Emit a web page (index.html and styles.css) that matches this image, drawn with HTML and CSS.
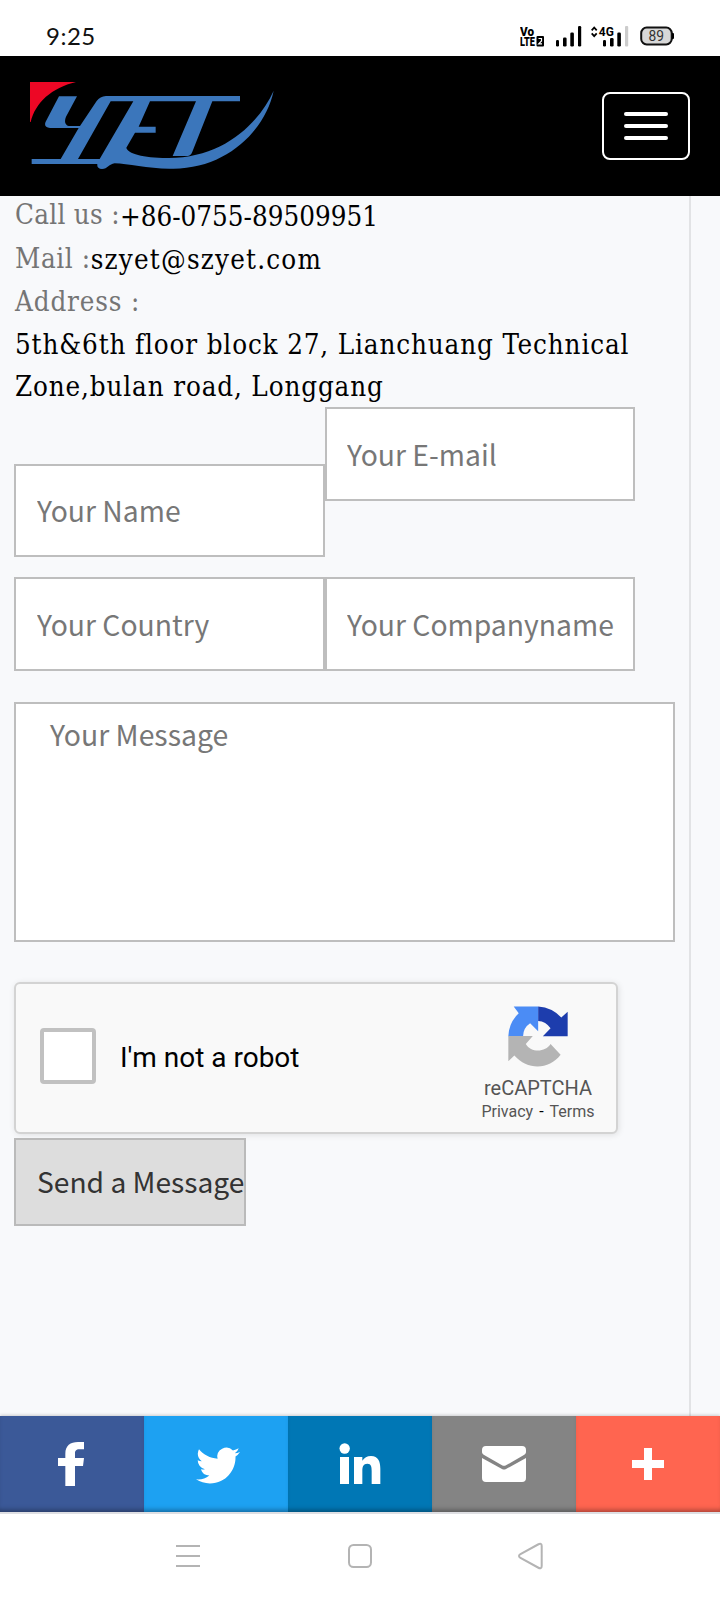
FILE: index.html
```html
<!DOCTYPE html>
<html lang="en">
<head>
<meta charset="utf-8">
<title>Contact</title>
<link rel="stylesheet" href="styles.css">
</head>
<body>
<div class="status">
  <span class="time">9:25</span>
  <svg class="indicators" width="160" height="26" viewBox="0 0 160 26">
    <g class="volte"><text x="0" y="10.500" textLength="14" lengthAdjust="spacingAndGlyphs">Vo</text><text x="0" y="21" textLength="15" lengthAdjust="spacingAndGlyphs">LTE</text></g>
    <rect x="16.5" y="11" width="7.5" height="10.5" rx="1"/>
    <path d="M18.500 13.500H21.500V16L18.700 18.900H22" fill="none" stroke="#fff" stroke-width="1.2"/>
    <g><rect x="36" y="15" width="3" height="6.5" rx="1.3"/><rect x="43" y="12.500" width="3.600" height="9" rx="1.300"/><rect x="50.300" y="7.500" width="3.600" height="14" rx="1.300"/><rect x="58" y="1" width="3.200" height="20.500" rx="1.300"/></g>
    <path d="M71.700 5.300L74.200 2.500L76.700 5.300M71.700 8.300L74.200 11.100L76.700 8.300" fill="none" stroke="#000" stroke-width="1.800"/>
    <text class="net" x="78.800" y="10.700" textLength="15" lengthAdjust="spacingAndGlyphs">4G</text>
    <g><rect x="83" y="15" width="3" height="6.500" rx="1.300"/><rect x="90" y="13" width="3.600" height="8.500" rx="1.300"/><rect x="97.300" y="7.500" width="3.600" height="14" rx="1.300"/><rect x="105" y="1" width="3.200" height="20.500" rx="1" fill="#ccc"/></g>
    <rect x="121.200" y="2.600" width="30.500" height="16.800" rx="5.500" fill="#d8d8d8" stroke="#111" stroke-width="2"/>
    <path d="M152 7.500l2 1v5l-2 1z"/>
    <text class="level" x="128.500" y="16" textLength="15.500" lengthAdjust="spacingAndGlyphs">89</text>
  </svg>
</div>
<header class="header">
  <svg class="logo" width="246" height="88" viewBox="90 246 738 264">
    <path fill="#ed0725" d="M90 246H228C155 263 106 308 92 366H90Z"/>
    <g fill="#3b76bb">
      <path d="M177 289H231L198 350C192 364 195 378 210 378H240L290 303Q300 289 318 288H720V304H637L577 455Q572 468 562 468H518L588 304H450L416 380H467V398H405L379 443C382 460 430 474 500 474C665 477 775 374 821 272C796 390 682 506 520 506C450 508 385 491 344 490C327 492 323 507 306 507Q290 506 292 492H95V477H182L236 384H150Q130 381 137 365ZM332 304L234 477H299L400 304Z"/>
    </g>
  </svg>
  <button class="menu" aria-label="Menu"><i></i><i></i><i></i></button>
</header>
<main class="page">
  <div class="content">
    <div class="contact">
      <p class="call"><span class="label">Call us :</span><span class="phone">+86-0755-89509951</span></p>
      <p class="mail"><span class="label">Mail :</span><span class="email">szyet@szyet.com</span></p>
      <p class="label addr">Address :</p>
      <p class="line1">5th&amp;6th floor block 27, Lianchuang Technical</p>
      <p class="line2">Zone,bulan road, Longgang</p>
    </div>
    <form class="form">
      <div class="fields">
        <input class="field name" placeholder="Your Name">
        <input class="field" placeholder="Your E-mail">
        <input class="field" placeholder="Your Country">
        <input class="field" placeholder="Your Companyname">
      </div>
      <textarea class="message" placeholder="Your Message"></textarea>
      <div class="captcha">
        <span class="check"></span>
        <span class="robot">I'm not a robot</span>
        <div class="brand">
          <svg width="60" height="61" viewBox="145 259 179 181">
            <path fill="#4b8cf5" d="M162 260H235V334L211 310Q190 324 190 349H146Q147 309 177 280Z"/>
            <path fill="#1d3dad" d="M235 260Q277 263 304 293L323 276V349H249L272 325Q258 304 235 303Z"/>
            <path fill="#b4b4b4" d="M146 348H219L198 372C214 399 257 397 272 372L302 404C268 449 203 451 164 406L146 423Z"/>
          </svg>
          <span class="brand-name">reCAPTCHA</span>
          <span class="terms">Privacy<b>-</b>Terms</span>
        </div>
      </div>
      <button class="send" type="button">Send a Message</button>
    </form>
  </div>
</main>
<nav class="share">
  <a class="fb"><svg width="144" height="96" viewBox="0 0 432 288"><path d="M196 210V150H174V126H196V113C196 89 211 78 234 78H252V100H238C228 100 225 105 225 113V126H252L249 150H225V210Z"/></svg></a>
  <a class="tw"><svg width="144" height="96" viewBox="0 0 432 288"><g transform="translate(156 82.500) scale(5.500)"><path d="M23.950 4.570a10 10 0 0 1-2.820.770 4.960 4.960 0 0 0 2.160-2.720c-.950.550-2 .950-3.130 1.180a4.920 4.920 0 0 0-8.380 4.480C7.690 8.090 4.070 6.130 1.640 3.160a4.820 4.820 0 0 0-.670 2.480c0 1.710.870 3.210 2.190 4.100a4.900 4.900 0 0 1-2.230-.620v.060a4.920 4.920 0 0 0 3.950 4.830 5 5 0 0 1-2.210.080 4.940 4.940 0 0 0 4.600 3.420A9.870 9.870 0 0 1 0 19.540a13.990 13.990 0 0 0 7.550 2.210c9.050 0 14-7.500 14-13.980 0-.210 0-.420-.020-.630a9.940 9.940 0 0 0 2.460-2.550z"/></g></svg></a>
  <a class="li"><svg width="144" height="96" viewBox="0 0 432 288"><circle cx="170" cy="97.500" r="15.500"/><path d="M156 123H183V204H156ZM198 123H223V134C229 125 237 120 249 120C271 120 277 137 277 158V204H251V165C251 153 250 143 238 143C226 143 223 152 223 165V204H198Z"/></svg></a>
  <a class="em"><svg width="144" height="96" viewBox="0 0 432 288"><path d="M162 90H270Q282 90 282 102V109Q282 113 277 116L222 148Q216 151 210 148L155 116Q150 113 150 109V102Q150 90 162 90ZM150 126L210 159Q216 162 222 159L282 126V186Q282 198 270 198H162Q150 198 150 186Z"/></svg></a>
  <a class="more"><svg width="144" height="96" viewBox="0 0 432 288"><path d="M204 96H228V132H264V156H228V192H204V156H168V132H204Z"/></svg></a>
</nav>
<footer class="system">
  <svg width="720" height="86" viewBox="0 0 720 86" fill="none" stroke="#b4b4b4" stroke-width="2">
    <path d="M176 32H200M176 42H200M176 52H200"/>
    <rect x="349" y="31" width="22" height="22" rx="4.500"/>
    <path d="M538 30.500L520.500 40Q517.500 42 520.500 44L538 53.500Q541.700 55.500 541.700 52V32Q541.700 28.500 538 30.500Z"/>
  </svg>
</footer>
</body>
</html>
```
FILE: styles.css
```css
* { box-sizing: border-box; }
body { margin: 0; width: 720px; height: 1600px; display: flex; flex-direction: column; background: #fff; overflow: hidden; }
p { margin: 0; }
.status { height: 56px; flex: none; display: flex; justify-content: space-between; padding: 25px 40px 0 46px; }
.time { font: 24px/24px Lato, sans-serif; color: #111; letter-spacing: .5px; margin-top: -1px; }
.indicators { font-family: Roboto, sans-serif; }
.volte { font-weight: 900; font-size: 13px; }
.net { font-weight: 700; font-size: 13px; }
.level { font-size: 14.500px; fill: #333; }
.header { height: 140px; flex: none; background: #000; display: flex; justify-content: space-between; align-items: flex-start; padding: 26px 30px 0; }
.menu { width: 88px; height: 68px; margin-top: 10px; padding: 0; border: 2px solid #fff; border-radius: 8px; background: none; display: flex; flex-direction: column; align-items: center; justify-content: center; gap: 8px; }
.menu i { width: 44px; height: 4px; border-radius: 2px; background: #fff; }
.page { height: 1220px; flex: none; background: #f8f9fb; }
.content { width: 691px; height: 1220px; border-right: 2px solid #e2e3e5; padding-left: 14px; }
.contact { height: 211px; padding-left: 1px; color: #000; font: 27.5px/40px "DejaVu Serif Condensed", "DejaVu Serif", serif; font-stretch: condensed; letter-spacing: .86px; white-space: nowrap; }
.contact p { height: 42px; display: flex; }
.contact .call, .contact .mail { height: 43px; }
.label { color: #757575; }
.mail .label { margin-top: -1px; }
.call .label { margin-top: -2px; letter-spacing: .3px; }
.mail .label { letter-spacing: .6px; }
.phone { letter-spacing: .02px; }
.email { letter-spacing: 1.2px; }
.contact .addr { margin-top: -1px; height: 43px; }
.form { display: block; }
.fields { display: grid; grid-template-columns: 311px 310px; grid-template-rows: 150px 94px; row-gap: 20px; }
.field { height: 94px; width: 100%; border: 2px solid #bebebe; border-radius: 0; padding: 0 0 2px 20px; background: #fff; font: 28.3px "Noto Sans CJK SC", sans-serif; outline: 0; }
.name { height: 93px; margin-top: 57px; padding-bottom: 2px; }
.field:nth-child(odd) { padding-left: 21px; }
.field::placeholder, .message::placeholder { color: #777; opacity: 1; }
.message { display: block; margin: 31px 0 0; width: 661px; height: 240px; border: 2px solid #bebebe; resize: none; background: #fff; padding: 8px 34px; font: 28.4px/44px "Noto Sans CJK SC", sans-serif; }
.captcha { width: 604px; height: 152px; margin-top: 40px; border: 2px solid #d3d3d3; border-radius: 6px; background: #f9f9f9; box-shadow: 1px 1px 6px rgba(0,0,0,.10); display: flex; align-items: flex-start; font-family: Roboto, sans-serif; }
.check { width: 56px; height: 56px; margin: 44px 0 0 24px; border: 4px solid #c1c1c1; border-radius: 4px; background: #fff; }
.robot { margin: 58px 0 0 24px; font-size: 28px; line-height: 32px; white-space: nowrap; color: #000; }
.brand { margin: 22px 18px 0 auto; width: 120px; display: flex; flex-direction: column; align-items: center; color: #555; }
.brand-name { font-size: 20px; line-height: 24px; margin-top: 9px; }
.terms { font-size: 16px; line-height: 20px; margin-top: 2px; white-space: nowrap; }
.terms b { margin: 0 6px; font-weight: 400; color: #000; }
.send { display: block; width: 232px; height: 88px; margin-top: 4px; border: 2px solid #bababa; padding: 0 0 4px 21px; background: #ddd; color: #333; text-align: left; white-space: nowrap; font: 28.2px "Noto Sans CJK SC", sans-serif; }
.share { height: 98px; flex: none; display: flex; border-bottom: 2px solid #dedfe3; box-shadow: 0 -1px 3px rgba(0,0,0,.18); }
.share a { width: 144px; height: 96px; box-shadow: inset 0 -5px 5px -3px rgba(0,0,0,.35); }
.share svg { display: block; fill: #fff; }
.fb { background: #3b5998; }
.tw { background: #1da1f2; }
.li { background: #0077b5; }
.em { background: #848484; }
.more { background: #ff6550; }
.system { height: 86px; flex: none; background: #fff; }
```
